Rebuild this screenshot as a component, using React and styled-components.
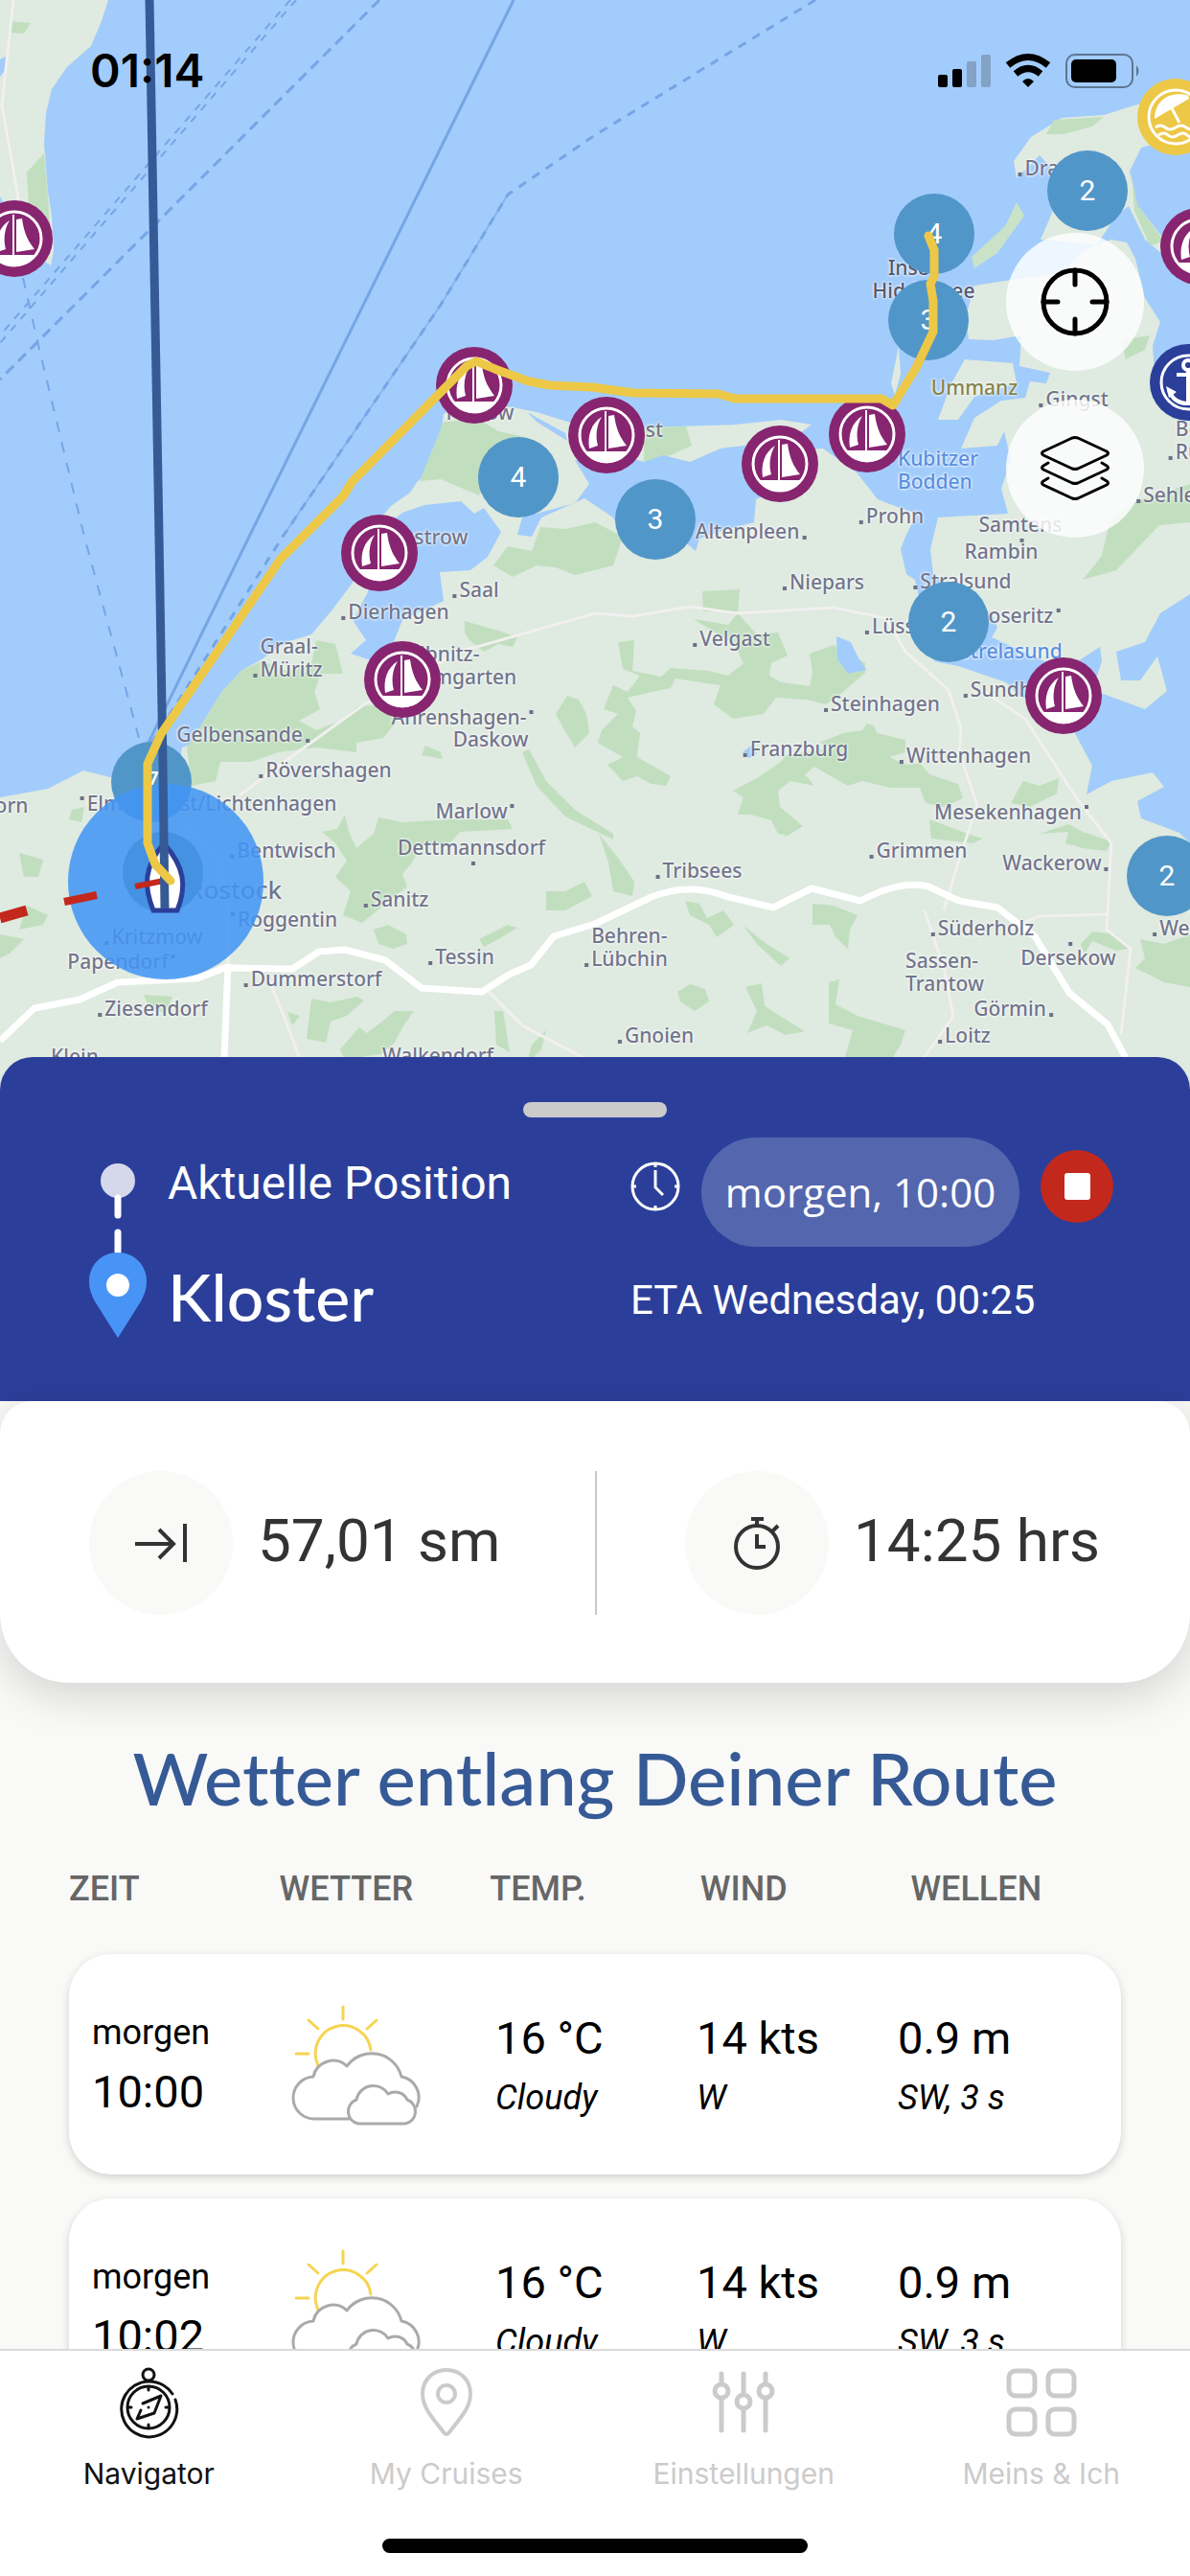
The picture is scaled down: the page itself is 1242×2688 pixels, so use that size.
import { useState } from "react";
import styled, { createGlobalStyle } from "styled-components";

const GlobalStyle = createGlobalStyle`
  * {
    box-sizing: border-box;
  }
  body {
    margin: 0;
    background: #f9f9f7;
    font-family: Roboto, "Liberation Sans", sans-serif;
  }
  button {
    all: unset;
    box-sizing: border-box;
    cursor: pointer;
  }
  svg {
    display: block;
    overflow: visible;
  }
`;

const Screen = styled.div`
  display: flex;
  flex-direction: column;
  height: 100vh;
  overflow: hidden;
`;

/* ---------- map ---------- */

const MapArea = styled.section`
  position: relative;
  flex: none;
  height: 1136px;
  overflow: hidden;
  background: #a2ccfb;
`;

const MapCanvas = styled.div`
  position: absolute;
  top: 0;
  left: 50%;
  width: 1242px;
  height: 100%;
  margin-left: -621px;
  & > svg {
    position: absolute;
    top: 0;
    left: 0;
    pointer-events: none;
  }
`;

const dotPlace = {
  bl: "left: -7px; bottom: 3px;",
  br: "right: -7px; bottom: 3px;",
  tl: "left: -7px; top: 5px;",
  tr: "right: -7px; top: 5px;",
  bc: "left: 50%; bottom: -7px;",
  tc: "left: 50%; top: -4px;",
};

const PlaceName = styled.span`
  position: absolute;
  left: ${({ $x }) => $x}px;
  top: ${({ $y }) => $y}px;
  transform: translate(-50%, -50%);
  font-family: "Noto Sans", sans-serif;
  font-size: ${({ $big }) => ($big ? 26 : 21)}px;
  font-weight: 500;
  line-height: 24px;
  white-space: pre;
  color: ${({ $color }) => $color || "#72758c"};
  text-shadow: 0 0 3px #fff, 0 0 3px #fff;
  &::after {
    content: "";
    display: ${({ $dot }) => ($dot ? "block" : "none")};
    position: absolute;
    width: 4px;
    height: 4px;
    background: #6d7087;
    ${({ $dot }) => dotPlace[$dot]}
  }
`;

const Pin = styled.button`
  position: absolute;
  left: ${({ $x }) => $x}px;
  top: ${({ $y }) => $y}px;
  transform: translate(-50%, -50%);
  width: 80px;
  height: 80px;
`;

const Cluster = styled(Pin)`
  width: 84px;
  height: 84px;
  border-radius: 50%;
  background: #5196c8;
  color: #fff;
  font-size: 30px;
  line-height: 84px;
  text-align: center;
`;

const MapButtons = styled.div`
  position: absolute;
  top: 243px;
  right: 48px;
  display: flex;
  flex-direction: column;
  gap: 30px;
`;

const RoundButton = styled.button`
  display: flex;
  align-items: center;
  justify-content: center;
  width: 144px;
  height: 144px;
  border-radius: 50%;
  background: rgba(255, 255, 255, 0.82);
`;

const StatusBar = styled.header`
  position: absolute;
  top: 46px;
  left: 0;
  right: 0;
  display: flex;
  align-items: center;
  justify-content: space-between;
  padding: 0 51px 0 94px;
  font-family: Inter, sans-serif;
  font-size: 48px;
  font-weight: 600;
  line-height: 56px;
`;

const places = [
  ["Prerow", 501, 430],
  ["Zingst", 661, 448],
  ["Wustrow", 444, 560],
  ["Saal", 500, 615, "bl"],
  ["Dierhagen", 416, 638, "bl"],
  ["Graal-\nMüritz", 304, 686, "bl"],
  ["Ribnitz-\nDamgarten", 482, 694],
  ["Ahrenshagen-", 479, 748, "tr"],
  ["Daskow", 512, 771],
  ["Gelbensande", 250, 766, "br"],
  ["Rövershagen", 343, 803, "bl"],
  ["Elmenhorst/Lichtenhagen", 221, 838, "tl"],
  ["orn", 12, 840],
  ["Marlow", 492, 846, "tr"],
  ["Dettmannsdorf", 492, 884, "bc"],
  ["Bentwisch", 299, 887, "bl"],
  ["Roggentin", 300, 959, "tl"],
  ["Sanitz", 417, 938, "bl"],
  ["Kritzmow", 164, 977, "bl"],
  ["Papendorf", 123, 1003, "tr"],
  ["Dummerstorf", 330, 1021, "bl"],
  ["Tessin", 485, 998, "bl"],
  ["Ziesendorf", 163, 1052, "bl"],
  ["Klein", 78, 1102],
  ["Walkendorf", 457, 1101],
  ["Altenpleen", 780, 554, "br"],
  ["Prohn", 934, 538, "bl"],
  ["Niepars", 863, 607, "bl"],
  ["Stralsund", 1008, 606, "bl"],
  ["Poseritz", 1059, 642, "tr"],
  ["Lüssow", 947, 653, "bl"],
  ["Sundhagen", 1070, 719, "bl"],
  ["Velgast", 767, 666, "bl"],
  ["Steinhagen", 924, 734, "bl"],
  ["Franzburg", 834, 781, "bl"],
  ["Wittenhagen", 1011, 788, "bl"],
  ["Mesekenhagen", 1052, 847, "tr"],
  ["Grimmen", 962, 887, "bl"],
  ["Wackerow", 1098, 900, "br"],
  ["Tribsees", 733, 908, "bl"],
  ["Behren-\nLübchin", 657, 988, "bl"],
  ["Süderholz", 1029, 968, "bl"],
  ["Sassen-\nTrantow", 986, 1014],
  ["Dersekow", 1115, 999, "tc"],
  ["Görmin", 1054, 1052, "br"],
  ["Gnoien", 688, 1080, "bl"],
  ["Loitz", 1010, 1080, "bl"],
  ["Weitenhagen", 1277, 968, "bl"],
  ["Samtens", 1065, 547, "bc"],
  ["Rambin", 1045, 575],
  ["Dranske", 1111, 175, "bl"],
  ["Gingst", 1124, 416, "bl"],
  ["Sehlen", 1227, 516, "bl"],
  ["Bergen\nRügen", 1263, 459, "bl"],
];

const sails = [
  [15, 249],
  [495, 402],
  [633, 454],
  [814, 484],
  [905, 453],
  [396, 577],
  [420, 709],
  [1110, 726],
  [1251, 257],
];

const clusters = [
  [4, 541, 498],
  [3, 684, 542],
  [4, 975, 244],
  [3, 969, 334],
  [2, 1135, 199],
  [2, 990, 649],
  [2, 1218, 914],
  [7, 158, 816],
  ["", 170, 910],
];

const woods = [
  "463,440 500,438 520,450 548,456 530,470 500,517 460,500 438,502",
  "216,747 232,721 253,699 273,690 300,700 325,694 330,668 350,672 358,703 335,703 328,722 334,740 312,752 330,762 356,752 372,738 384,736 410,735 415,752 400,770 372,775 372,785 330,780 290,785 262,795 230,795 225,815 200,820 195,780",
  "564,550 590,552 621,545 650,560 640,590 600,600 580,592 560,590 535,602 515,590 530,570 555,575",
  "485,648 520,658 540,665 535,675 520,672 505,680 490,668 485,660",
  "580,745 592,726 604,730 612,745 615,765 600,780 588,760",
  "336,868 352,865 360,850 364,868 372,885 390,870 395,853 420,858 470,855 530,855 535,865 480,868 470,880 440,882 430,900 420,912 425,925 400,945 378,963 358,955 366,930 350,915 362,898 350,880",
  "390,970 405,965 424,975 425,985 410,990 395,985",
  "325,1042 345,1046 372,1040 380,1044 362,1060 345,1066 340,1088 320,1084",
  "355,1095 375,1072 383,1078 400,1065 412,1055 432,1055 420,1072 412,1088 398,1100 376,1103 362,1110",
  "545,785 552,782 570,815 600,845 640,870 640,876 590,852 560,820",
  "570,930 590,930 610,920 618,935 590,950 570,950",
  "500,980 530,965 540,968 520,980 505,988",
  "516,1055 525,1055 532,1098 518,1090",
  "555,1090 570,1075 565,1095 550,1110",
  "300,1056 313,1060 305,1070",
  "444,778 460,785 462,792 440,788",
  "733,617 772,615 770,638 734,638",
  "724,646 760,652 770,640 790,662 812,660 822,684 805,692 803,705 815,712 845,716 848,702 845,682 870,673 903,692 903,702 880,722 862,735 842,730 810,728 797,745 765,750 745,735 752,715 730,712 705,708 700,718 680,722 655,728 664,742 660,758 668,765 665,790 700,810 695,820 680,818 665,810 650,815 634,798 650,790 624,775 628,762 645,745 630,740 640,715 655,722 668,705 650,698 645,670 662,668 660,700 690,706 700,697 740,700 760,705 776,692 766,672 740,656",
  "855,775 880,765 900,762 905,755 912,757 915,765 945,772 945,785 928,790 945,798 960,796 970,808 1000,818 1005,833 985,842 966,838 960,822 930,822 900,815 885,820 850,800 840,808 850,820 825,815 812,825 814,842 838,862 822,872 812,870 805,856 784,850 770,850 776,832 765,825 790,812 815,795 820,788 870,780",
  "1055,838 1068,815 1085,820 1105,812 1103,828 1075,842",
  "1085,870 1115,860 1130,868 1160,878 1155,888 1130,885 1112,880 1115,868",
  "865,1025 876,1022 872,1048 895,1060 945,1075 940,1090 928,1110 880,1110 890,1075 865,1068",
  "778,1030 795,1026 798,1050 840,1076 820,1080 800,1070 780,1078 790,1055",
  "848,943 870,945 895,955 887,970 885,990 872,978 866,965 848,965",
  "715,940 730,943 738,958 755,950 766,965 748,978 740,965 720,955",
  "776,966 800,985 824,1000 815,1008 790,985",
  "707,1035 720,1027 736,1032 740,1045 725,1055 710,1045",
  "1190,980 1215,985 1242,975 1242,1030 1215,1025 1185,1010 1195,1000",
  "1128,985 1140,972 1165,975 1178,990 1165,992 1140,982 1132,995",
  "625,870 645,895 662,920 660,935 640,930 635,900",
  "970,855 1010,870 1026,875 1015,880 972,875",
  "20,890 45,897 40,915 25,915",
  "28,945 50,955 45,965 20,970",
  "0,975 25,980 10,995 0,1000",
  "150,1038 180,1040 172,1058 155,1050",
  "75,845 88,842 85,858 72,855",
  "1158,545 1180,525 1242,505 1242,545 1210,548 1165,595 1130,605 1150,580",
  "672,446 716,445 722,465 700,475 672,482",
  "1100,125 1152,122 1140,132 1110,140 1092,140",
  "1181,180 1187,214 1215,252 1200,256 1184,220",
  "28,180 46,160 50,205 52,235 30,215",
  "10,22 32,24 25,35 10,34",
  "1170,355 1200,350 1195,365 1175,375",
];

const SailIcon = () => (
  <svg width="80" height="80" viewBox="-40 -40 80 80">
    <circle r="40" fill="#872570" />
    <circle r="28" fill="none" stroke="#fff" strokeWidth="3" />
    <path d="M-23 17H23A28 28 0 0 1 -23 17Z" fill="#fff" />
    <path
      d="M2 -20L8 -21C10 -6 14 2 21 11L2 14ZM-5 -19C-16 -12 -20 0 -18 14L-9 11C-12 0 -10 -11 -5 -19Z"
      fill="#fff"
    />
    <path d="M-1 -25V17" stroke="#fff" strokeWidth="2" />
  </svg>
);

const BeachIcon = () => (
  <svg width="80" height="80" viewBox="-40 -40 80 80">
    <circle r="40" fill="#ecc846" />
    <circle r="28" fill="none" stroke="#fff" strokeWidth="3" />
    <path d="M-22 2C-22 -16 -8 -27 12 -23Q14 -21 14 -19Z" fill="#fff" />
    <path
      d="M-4 -9L4 6M-21 11Q-16 7 -11 11T0 11T11 11T22 11M-18 19Q-12 15 -8 19T2 19T12 19T20 19"
      fill="none"
      stroke="#fff"
      strokeWidth="3"
    />
  </svg>
);

const AnchorIcon = () => (
  <svg width="80" height="80" viewBox="-40 -40 80 80">
    <circle r="40" fill="#2b3f9a" />
    <circle r="28" fill="none" stroke="#fff" strokeWidth="3" />
    <g fill="none" stroke="#fff" strokeWidth="4">
      <circle cy="-18" r="5" />
      <path d="M0 -13V22M-12 -8H12M-20 8C-16 20 -6 22 0 22S16 20 20 8" />
    </g>
    <path d="M-23 4L-12 10L-20 16ZM23 4L12 10L20 16Z" fill="#fff" />
  </svg>
);

const MapBase = () => (
  <svg width="1242" height="1136" viewBox="0 0 1242 1136">
    <g fill="#dfeae0">
      <path d="M0 0H113L106 22L95 48L70 70L54 93L48 118L46 150L50 200L54 225L56 262L53 277L30 262L0 205Z" />
      <path d="M0 832L50 823L87 804L119 812L150 806L185 806L190 780L198 777L216 747L232 721L253 699L273 688L299 670L325 662L347 636L368 608L372 570L408 528L428 514L436 502L449 490L458 470L463 432L500 420L535 425L560 430L602 443L640 446L672 446L768 443L815 438L847 443L835 452L800 462L790 476L830 470L859 468L894 493L916 521L934 528L957 536L945 560L940 573L946 599L955 605L975 690L1000 695L1050 712L1062 725L1110 745L1124 769L1140 799L1134 829L1160 815L1203 806L1215 821L1187 836L1191 854L1231 869L1242 880V1136H0Z" />
      <path d="M979 540L971 573L974 600L1035 640L1041 655L1035 665L1090 690L1125 690L1148 675L1150 690L1140 720L1195 740L1218 721L1208 685L1190 710L1170 710L1165 680L1195 670L1211 640L1242 620V430L1205 390L1203 361L1211 336L1195 311L1185 270L1176 253L1160 250L1130 262L1110 285L1049 293L1017 298L1008 330L1011 354L1037 355L1066 350L1064 382L1096 389L1092 400L1075 398L1070 415L1045 418L1017 436L1003 468L1041 465L1048 450L1055 480L1045 510L1052 536Z" />
      <path d="M1061 186L1058 168L1076 143L1108 123L1152 120L1187 109L1242 106V140L1191 154L1179 179L1187 214L1215 250L1242 265L1225 275L1195 250L1178 215L1165 225L1145 255L1086 250L1098 222L1110 190L1085 162Z" />
      <path d="M1007 375L1057 379L1061 400L1017 414L1000 438L979 438L993 400Z" />
      <path d="M938 361L940 390L934 412L930 400Z" />
      <path d="M1061 211L1069 225L1041 264L1017 280L1014 268L1049 236Z" fill="#c9e2c8" />
    </g>
    <g fill="#c1dfbf">
      {woods.map((points) => (
        <polygon key={points} points={points} />
      ))}
    </g>
    <g fill="#a2ccfb">
      <path d="M384 618L390 560L420 535L443 527L481 523L495 536L505 530L523 555L509 581L491 595L459 597L463 627L420 647L408 677L396 692L366 682L382 668L368 647Z" />
      <path d="M550 430L590 452L592 460L560 440Z" />
      <path d="M600 480L650 475L672 482L692 475L720 482L752 468L800 462L842 470L832 505L789 521L787 545L760 552L730 562L726 575L718 568L700 560L650 560L640 540L610 520L565 540L555 560L540 558L545 540L600 525L615 505Z" />
      <path d="M873 664L888 670L895 685L904 699L885 703L874 688Z" />
      <path d="M0 62L8 58L8 70L0 80Z" />
      <path d="M775 785L784 778L790 786L782 791Z" />
    </g>
    <g fill="none" stroke="#f1f0ef" strokeWidth="3">
      <path d="M621 640L660 643L720 633L770 640L870 634L925 645L945 680L990 720L1003 760L1001 785L1020 840L1000 900L985 950" />
      <path d="M250 830L290 800L380 735L480 680L621 640" />
      <path d="M1025 720L1070 750L1125 835L1160 880L1155 970L1180 990L1170 1080" />
      <path d="M1050 970L1085 956L1155 954M965 950L985 1010L995 1060L960 1110" />
      <path d="M510 1035L545 1070L621 1110M280 1020L300 1070L315 1110" />
      <path d="M14 0L2 110L18 200L22 240" />
      <path d="M190 860L225 890L238 930V1006" />
    </g>
    <g fill="none" stroke="#fff" strokeWidth="7" strokeLinejoin="round">
      <path d="M0 1086L36 1052L83 1043L123 1025L206 1021L234 1010L305 1011L333 993L360 991L402 1002L440 1031L503 1035L531 1017L554 1007L578 977L621 964L680 936Q720 920 760 936L807 947L847 927L898 940Q940 918 969 925L1001 940L1041 947L1080 977L1116 1036L1156 1069L1175 1104" />
      <path d="M238 1006L234 1104" />
    </g>
    <g fill="none" stroke="#75a5e6" strokeWidth="3">
      <path d="M396 0L0 396" strokeDasharray="11 7" />
      <path d="M309 0L0 358M303 0L0 350" strokeWidth="2" strokeDasharray="8 8" />
      <path d="M536 0L260 560L150 785" />
      <path d="M851 0L621 141L530 203L460 318L295 560L152 785" strokeDasharray="9 8" />
      <path d="M530 203L460 318L295 560" strokeWidth="2" opacity="0.6" />
      <path d="M24 290L40 360L88 560L145 770" strokeDasharray="11 11" strokeWidth="2" />
    </g>
  </svg>
);

const RouteLayer = () => (
  <svg width="1242" height="1136" viewBox="0 0 1242 1136">
    <circle cx="173" cy="920" r="102" fill="#4395f5" opacity="0.87" />
    <circle cx="170" cy="910" r="42" fill="#4690dd" opacity="0.7" />
    <path
      d="M171 880C150 905 150 925 160 950H185C195 925 193 905 171 880Z"
      fill="#fff"
      stroke="#2b3f9a"
      strokeWidth="5"
    />
    <path d="M0 958L28 950" stroke="#c3281c" strokeWidth="11" />
    <path d="M67 941L101 934" stroke="#c3281c" strokeWidth="8" />
    <path d="M141 925L171 919" stroke="#c3281c" strokeWidth="6" />
    <path d="M156 0L166 560L170 799L172 948" fill="none" stroke="#365a96" strokeWidth="9" />
    <path
      d="M969 246L975 261V289L971 296L974 314V346L956 384L932 423L920 416H767L750 411L661 410L618 404L574 402L552 398L519 386L497 377L487 382L368 502L358 518L293 583L168 766L154 797V880L162 902L178 919"
      fill="none"
      stroke="#ecc846"
      strokeWidth="9"
      strokeLinejoin="round"
      strokeLinecap="round"
    />
  </svg>
);

const StatusIcons = () => (
  <svg width="212" height="36" viewBox="0 0 212 36">
    <rect x="0" y="22" width="10" height="13" rx="2" />
    <rect x="15" y="16" width="10" height="19" rx="2" />
    <g fill="#84a1c6">
      <rect x="30" y="8" width="10" height="27" rx="2" />
      <rect x="45" y="1" width="10" height="34" rx="2" />
    </g>
    <g fill="none" stroke="#000" strokeWidth="7">
      <path d="M73 12Q94 -5 115 12" />
      <path d="M81 21Q94 10 107 21" />
    </g>
    <path d="M88 29Q94 23 100 29L94 35Z" />
    <rect x="134" y="1" width="69" height="34" rx="9" fill="none" stroke="#5d7690" strokeWidth="2" />
    <rect x="139" y="6" width="47" height="24" rx="5" />
    <path d="M207 12Q212 18 207 24Z" fill="#5d7690" />
  </svg>
);

const Map = () => (
  <MapArea>
    <MapCanvas>
      <MapBase />
      {places.map(([name, x, y, dot]) => (
        <PlaceName key={name} $x={x} $y={y} $dot={dot}>
          {name}
        </PlaceName>
      ))}
      <PlaceName $x={245} $y={928} $big>
        Rostock
      </PlaceName>
      <PlaceName $x={964} $y={291} $color="#55586c">
        {"   Insel\nHiddensee"}
      </PlaceName>
      <PlaceName $x={1017} $y={404} $color="#85844c">
        Ummanz
      </PlaceName>
      <PlaceName $x={979} $y={490} $color="#5a8fdf">
        {"Kubitzer\nBodden"}
      </PlaceName>
      <PlaceName $x={1055} $y={679} $color="#5a8fdf">
        Strelasund
      </PlaceName>
      {clusters.map(([count, x, y]) => (
        <Cluster key={`${x}-${y}`} $x={x} $y={y}>
          {count}
        </Cluster>
      ))}
      {sails.map(([x, y]) => (
        <Pin key={`${x}-${y}`} $x={x} $y={y} aria-label="Marina">
          <SailIcon />
        </Pin>
      ))}
      <Pin $x={1227} $y={122} aria-label="Strand">
        <BeachIcon />
      </Pin>
      <Pin $x={1240} $y={399} aria-label="Hafen">
        <AnchorIcon />
      </Pin>
      <RouteLayer />
    </MapCanvas>
    <MapButtons>
      <RoundButton aria-label="Position">
        <svg width="72" height="72" viewBox="0 0 72 72" fill="none" stroke="#000" strokeWidth="5">
          <circle cx="36" cy="36" r="33" />
          <path d="M36 3V18M36 54V69M3 36H18M54 36H69" strokeLinecap="round" />
        </svg>
      </RoundButton>
      <RoundButton aria-label="Ebenen">
        <svg
          width="72"
          height="68"
          viewBox="0 0 72 68"
          fill="none"
          stroke="#000"
          strokeWidth="3"
          strokeLinejoin="round"
          strokeLinecap="round"
        >
          <path d="M33 2Q36 1 39 2L69 16Q72 18 69 20L39 34Q36 35 33 34L3 20Q0 18 3 16Z" />
          <path d="M8 28L3 31Q0 33 3 35L33 49Q36 50 39 49L69 35Q72 33 69 31L64 28" />
          <path d="M8 44L3 47Q0 49 3 51L33 65Q36 66 39 65L69 51Q72 49 69 47L64 44" />
        </svg>
      </RoundButton>
    </MapButtons>
    <StatusBar>
      <span>01:14</span>
      <StatusIcons />
    </StatusBar>
  </MapArea>
);

/* ---------- route sheet ---------- */

const Sheet = styled.main`
  position: relative;
  flex: 1;
  min-height: 0;
  margin-top: -33px;
  overflow: hidden;
  border-radius: 34px 34px 0 0;
  background: #f9f9f7;
`;

const RoutePanel = styled.section`
  height: 359px;
  padding-top: 47px;
  background: #2b3f9a;
  color: #fff;
`;

const Handle = styled.div`
  width: 150px;
  height: 16px;
  margin: 0 auto 21px;
  border-radius: 8px;
  background: #cbcbcb;
`;

const RouteGrid = styled.div`
  display: grid;
  grid-template-columns: 60px 1fr 504px;
  grid-template-rows: 114px 112px;
  column-gap: 22px;
  align-items: center;
  padding: 0 80px 0 93px;
  & > svg {
    grid-row: 1 / 3;
    align-self: start;
    margin-top: 27px;
  }
`;

const StartName = styled.span`
  font-size: 48px;
  line-height: 56px;
  padding-bottom: 18px;
`;

const TargetName = styled.h1`
  margin: 0;
  padding-bottom: 8px;
  font-family: Lato, sans-serif;
  font-size: 68px;
  font-weight: 500;
  line-height: 80px;
`;

const Departure = styled.div`
  display: flex;
  align-items: center;
  & > svg {
    margin: 0 22px 12px 0;
  }
`;

const TimeButton = styled.button`
  width: 332px;
  height: 114px;
  border-radius: 57px;
  background: #5466ae;
  font-family: "Open Sans", sans-serif;
  font-size: 42px;
  font-weight: 500;
  line-height: 114px;
  text-align: center;
`;

const StopButton = styled.button`
  display: flex;
  align-items: center;
  justify-content: center;
  width: 76px;
  height: 76px;
  margin: 0 0 12px 22px;
  border-radius: 50%;
  background: #c3281c;
  &::before {
    content: "";
    width: 27px;
    height: 28px;
    border-radius: 3px;
    background: #fff;
  }
`;

const Eta = styled.span`
  font-size: 42px;
  line-height: 52px;
`;

const Stats = styled.section`
  display: grid;
  grid-template-columns: 1fr 1fr;
  padding: 73px 0 71px;
  border-radius: 34px 34px 72px 72px;
  background: #fff;
  box-shadow: 0 12px 48px rgba(0, 0, 0, 0.16);
`;

const Stat = styled.div`
  display: flex;
  align-items: center;
  gap: 26px;
  height: 150px;
  padding-left: 93px;
  color: #333;
  font-size: 62px;
  line-height: 146px;
  & + & {
    border-left: 2px solid #c9c9c9;
    padding-left: 92px;
  }
`;

const StatValue = styled.span`
  padding-bottom: 4px;
`;

const StatIcon = styled.span`
  display: flex;
  align-items: center;
  justify-content: center;
  width: 150px;
  height: 150px;
  border-radius: 50%;
  background: #f9f9f7;
`;

/* ---------- weather ---------- */

const WeatherTitle = styled.h2`
  margin: 53px 0 45px;
  color: #365a96;
  font-family: Lato, sans-serif;
  font-size: 76px;
  font-weight: 500;
  font-variant-ligatures: none;
  line-height: 92px;
  text-align: center;
`;

const WeatherTable = styled.table`
  display: block;
  padding: 0 72px;
  & thead,
  & tbody {
    display: block;
  }
`;

const HeadRow = styled.tr`
  display: grid;
  grid-template-columns: repeat(5, 1fr);
  margin-bottom: 43px;
  & th {
    padding: 0;
    color: #666;
    font-size: 36px;
    font-weight: 500;
    line-height: 50px;
    text-align: left;
  }
`;

const WeatherRow = styled.tr`
  display: grid;
  grid-template-columns: repeat(5, 1fr);
  height: 230px;
  margin-bottom: 25px;
  padding: 0 24px;
  border-radius: 44px;
  background: #fff;
  box-shadow: 0 3px 8px rgba(0, 0, 0, 0.16);
`;

const WeatherCell = styled.td`
  display: flex;
  flex-direction: column;
  gap: 4px;
  padding: 56px 0 0 1px;
`;

const TimeCell = styled(WeatherCell)`
  padding-left: 0;
`;

const IconCell = styled(WeatherCell)`
  padding-top: 53px;
`;

const Value = styled.span`
  font-size: 47px;
  line-height: 64px;
`;

const Note = styled.span`
  font-size: 36px;
  font-style: ${({ $italic }) => ($italic ? "italic" : "normal")};
  line-height: 52px;
`;

const CloudyIcon = () => (
  <svg width="130" height="126" viewBox="0 0 130 126" fill="none" strokeWidth="3" strokeLinecap="round">
    <g stroke="#f5d451">
      <path d="M51 2V15M15 16L25 25M86 16L76 25M2 51H15" />
      <path d="M25 63A29 29 0 1 1 80 47" />
    </g>
    <g stroke="#aaa" strokeLinejoin="round">
      <path d="M57 119H22A22 22 0 0 1 20 75A21 21 0 0 1 55 64A32 32 0 0 1 112 75A22 22 0 0 1 128 106" />
      <path d="M67 124A13 13 0 0 1 65 99A18 18 0 0 1 98 93A14 14 0 0 1 118 99A13 13 0 0 1 116 124Z" fill="#fff" />
    </g>
  </svg>
);

const forecast = [
  { day: "morgen", time: "10:00", temp: "16 °C", sky: "Cloudy", wind: "14 kts", from: "W", waves: "0.9 m", swell: "SW, 3 s" },
  { day: "morgen", time: "10:02", temp: "16 °C", sky: "Cloudy", wind: "14 kts", from: "W", waves: "0.9 m", swell: "SW, 3 s" },
];

const Weather = () => (
  <section>
    <WeatherTitle>Wetter entlang Deiner Route</WeatherTitle>
    <WeatherTable>
      <thead>
        <HeadRow>
          <th>ZEIT</th>
          <th>WETTER</th>
          <th>TEMP.</th>
          <th>WIND</th>
          <th>WELLEN</th>
        </HeadRow>
      </thead>
      <tbody>
        {forecast.map((row) => (
          <WeatherRow key={row.time}>
            <TimeCell>
              <Note>{row.day}</Note>
              <Value>{row.time}</Value>
            </TimeCell>
            <IconCell>
              <CloudyIcon />
            </IconCell>
            <WeatherCell>
              <Value>{row.temp}</Value>
              <Note $italic>{row.sky}</Note>
            </WeatherCell>
            <WeatherCell>
              <Value>{row.wind}</Value>
              <Note $italic>{row.from}</Note>
            </WeatherCell>
            <WeatherCell>
              <Value>{row.waves}</Value>
              <Note $italic>{row.swell}</Note>
            </WeatherCell>
          </WeatherRow>
        ))}
      </tbody>
    </WeatherTable>
  </section>
);

/* ---------- tab bar ---------- */

const TabBar = styled.footer`
  position: relative;
  flex: none;
  height: 237px;
  border-top: 2px solid #dadada;
  background: #fff;
`;

const Tabs = styled.nav`
  display: grid;
  grid-template-columns: repeat(4, 1fr);
  padding-top: 18px;
`;

const Tab = styled.button`
  display: flex;
  flex-direction: column;
  align-items: center;
  gap: 20px;
  color: ${({ $active }) => ($active ? "#111" : "#cbcbcb")};
  font-family: Inter, sans-serif;
  font-size: 30px;
  line-height: 36px;
`;

const HomeIndicator = styled.div`
  width: 444px;
  height: 15px;
  margin: 50px auto 0;
  border-radius: 8px;
  background: #000;
`;

const iconProps = { height: 72, fill: "none", stroke: "currentColor" };

const tabs = [
  {
    label: "Navigator",
    icon: (
      <svg width="62" viewBox="0 0 62 72" {...iconProps} strokeWidth="3" strokeLinecap="round">
        <circle cx="31" cy="7" r="6" />
        <path d="M56 27A29 29 0 1 0 59 33" />
        <circle cx="31" cy="41" r="22" />
        <path d="M31 20V23M31 59V62M10 41H13M49 41H52" />
        <path d="M25 37L44 29L37 47L19 53L23 44" strokeLinejoin="round" />
        <path d="M31 41H31" />
      </svg>
    ),
  },
  {
    label: "My Cruises",
    icon: (
      <svg width="56" viewBox="0 0 56 72" {...iconProps} strokeWidth="4" strokeLinejoin="round">
        <path d="M28 2C13 2 3 13 3 27C3 43 17 56 25 67Q28 71 31 67C39 56 53 43 53 27C53 13 43 2 28 2Z" />
        <circle cx="28" cy="27" r="9" />
      </svg>
    ),
  },
  {
    label: "Einstellungen",
    icon: (
      <svg width="64" viewBox="0 0 64 72" {...iconProps} strokeWidth="5" strokeLinecap="round">
        <path d="M9 6V16M9 32V65M32 6V27M32 43V65M55 6V16M55 32V65" />
        <circle cx="9" cy="24" r="7" />
        <circle cx="32" cy="35" r="7" />
        <circle cx="55" cy="24" r="7" />
      </svg>
    ),
  },
  {
    label: "Meins & Ich",
    icon: (
      <svg width="74" viewBox="0 0 74 72" {...iconProps} strokeWidth="5">
        <rect x="3" y="3" width="27" height="26" rx="7" />
        <rect x="44" y="3" width="27" height="26" rx="7" />
        <rect x="3" y="43" width="27" height="26" rx="7" />
        <rect x="44" y="43" width="27" height="26" rx="7" />
      </svg>
    ),
  },
];

export default function App() {
  const [active, setActive] = useState("Navigator");

  return (
    <Screen>
      <GlobalStyle />
      <Map />
      <Sheet>
        <RoutePanel>
          <Handle />
          <RouteGrid>
            <svg width="60" height="182" viewBox="0 0 60 182">
              <circle cx="30" cy="18" r="18" fill="#d4d8ea" />
              <path d="M30 36V54M30 72V92" stroke="#fff" strokeWidth="7" strokeLinecap="round" />
              <path d="M30 93C13 93 0 106 0 123C0 132 3 138 6 144L30 182L54 144C57 138 60 132 60 123C60 106 47 93 30 93Z" fill="#4894f6" />
              <circle cx="30" cy="127" r="12" fill="#fff" />
            </svg>
            <StartName>Aktuelle Position</StartName>
            <Departure>
              <svg width="52" height="52" viewBox="0 0 52 52" fill="none" stroke="#fff" strokeWidth="3">
                <circle cx="26" cy="26" r="24" />
                <path d="M26 9V27L34 35M26 2V6M26 46V50M2 26H6M46 26H50" />
              </svg>
              <TimeButton>morgen, 10:00</TimeButton>
              <StopButton aria-label="Stopp" />
            </Departure>
            <TargetName>Kloster</TargetName>
            <Eta>ETA Wednesday, 00:25</Eta>
          </RouteGrid>
        </RoutePanel>
        <Stats>
          <Stat>
            <StatIcon>
              <svg width="54" height="42" viewBox="0 0 54 42" fill="none" stroke="#333" strokeWidth="4">
                <path d="M0 22H40M25 7L40 22L25 37M52 1V41" />
              </svg>
            </StatIcon>
            <StatValue>57,01 sm</StatValue>
          </Stat>
          <Stat>
            <StatIcon>
              <svg width="48" height="54" viewBox="0 0 48 54" fill="none" stroke="#333" strokeWidth="4">
                <circle cx="24" cy="31" r="22" />
                <path d="M18 2H31M24 2V9M40 15L46 9M24 18V31H33" />
              </svg>
            </StatIcon>
            <StatValue>14:25 hrs</StatValue>
          </Stat>
        </Stats>
        <Weather />
      </Sheet>
      <TabBar>
        <Tabs>
          {tabs.map(({ label, icon }) => (
            <Tab key={label} $active={active === label} onClick={() => setActive(label)}>
              {icon}
              {label}
            </Tab>
          ))}
        </Tabs>
        <HomeIndicator />
      </TabBar>
    </Screen>
  );
}
